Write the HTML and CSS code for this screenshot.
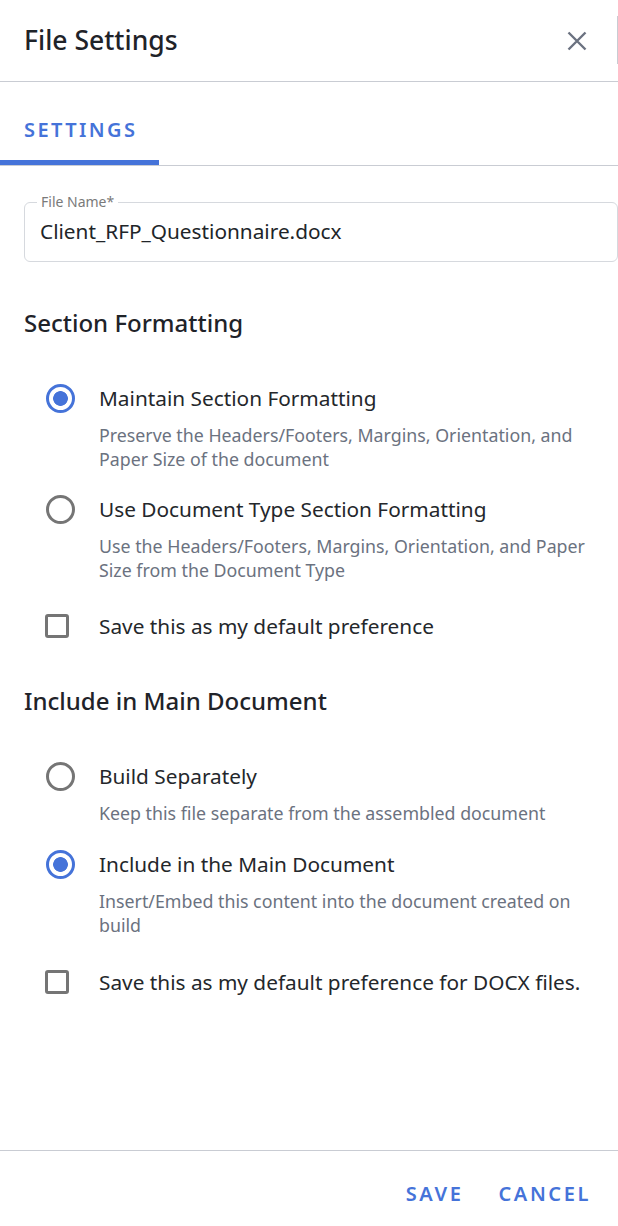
FILE: index.html
```html
<!DOCTYPE html>
<html lang="en">
<head>
<meta charset="utf-8">
<title>File Settings</title>
<link rel="stylesheet" href="styles.css">
</head>
<body>
<div class="dialog">
  <header class="dialog-header">
    <h1 class="dialog-title">File Settings</h1>
    <div class="header-actions">
      <button class="close-btn" aria-label="Close">
        <svg viewBox="0 0 20 20" width="20" height="20"><path d="M1.5 1.5 L18.5 18.5 M18.5 1.5 L1.5 18.5" stroke="currentColor" stroke-width="2.4" fill="none"/></svg>
      </button>
      <span class="header-divider"></span>
    </div>
  </header>

  <nav class="tabs">
    <div class="tab active">SETTINGS</div>
  </nav>

  <main class="content">
    <div class="field">
      <label class="field-label">File Name*</label>
      <div class="field-input">Client_RFP_Questionnaire.docx</div>
    </div>

    <section class="group">
      <h2 class="group-title">Section Formatting</h2>
      <div class="options">
        <div class="option">
          <div class="option-row">
            <span class="radio checked"></span>
            <span class="option-label">Maintain Section Formatting</span>
          </div>
          <p class="option-desc">Preserve the Headers/Footers, Margins, Orientation, and Paper Size of the document</p>
        </div>
        <div class="option">
          <div class="option-row">
            <span class="radio"></span>
            <span class="option-label">Use Document Type Section Formatting</span>
          </div>
          <p class="option-desc">Use the Headers/Footers, Margins, Orientation, and Paper Size from the Document Type</p>
        </div>
        <div class="option check-option">
          <div class="option-row">
            <span class="checkbox"></span>
            <span class="option-label">Save this as my default preference</span>
          </div>
        </div>
      </div>
    </section>

    <section class="group group-second">
      <h2 class="group-title">Include in Main Document</h2>
      <div class="options">
        <div class="option">
          <div class="option-row">
            <span class="radio"></span>
            <span class="option-label">Build Separately</span>
          </div>
          <p class="option-desc">Keep this file separate from the assembled document</p>
        </div>
        <div class="option">
          <div class="option-row">
            <span class="radio checked"></span>
            <span class="option-label">Include in the Main Document</span>
          </div>
          <p class="option-desc">Insert/Embed this content into the document created on build</p>
        </div>
        <div class="option check-option">
          <div class="option-row">
            <span class="checkbox"></span>
            <span class="option-label">Save this as my default preference for DOCX files.</span>
          </div>
        </div>
      </div>
    </section>
  </main>

  <footer class="dialog-footer">
    <button class="text-btn">SAVE</button>
    <button class="text-btn">CANCEL</button>
  </footer>
</div>
</body>
</html>
```

FILE: styles.css
```css
* { box-sizing: border-box; }

html, body {
  margin: 0;
  padding: 0;
  background: #ffffff;
}

body {
  font-family: "Noto Sans", "Open Sans", sans-serif;
  color: #212529;
}

.dialog {
  width: 618px;
  height: 1226px;
  display: flex;
  flex-direction: column;
  overflow: hidden;
}

.dialog-header {
  height: 82px;
  flex: none;
  display: flex;
  align-items: center;
  justify-content: space-between;
  padding: 0 0 2px 24px;
  border-bottom: 1px solid #c9ccd3;
}

.dialog-title {
  margin: 0;
  font-size: 26.5px;
  font-weight: 500;
  color: #1f2329;
  line-height: 34px;
}

.header-actions {
  display: flex;
  align-items: center;
  align-self: stretch;
}

.close-btn {
  border: 0;
  background: none;
  padding: 0;
  width: 20px;
  height: 20px;
  color: #6b7280;
  margin-right: 30px;
  margin-top: 2px;
  display: flex;
}

.header-divider {
  width: 1px;
  height: 48px;
  background: #c9ccd3;
}

.tabs {
  height: 84px;
  flex: none;
  display: flex;
  align-items: flex-end;
  border-bottom: 1px solid #c9ccd3;
}

.tab {
  width: 159px;
  height: 83px;
  padding: 35px 0 0 24px;
  font-size: 20px;
  font-weight: 600;
  letter-spacing: 2.4px;
  color: #4573d9;
  line-height: 26px;
}

.tab.active {
  border-bottom: 5px solid #4573d9;
}

.content {
  flex: 1;
  padding: 36px 0 0 24px;
}

.field {
  position: relative;
  height: 60px;
  border: 1px solid #d6d9de;
  border-radius: 6px;
  padding: 0 0 0 15px;
  display: flex;
  align-items: center;
}

.field-label {
  position: absolute;
  top: -10px;
  left: 12px;
  padding: 0 4px;
  background: #ffffff;
  font-size: 14px;
  line-height: 18px;
  color: #7a7a7a;
}

.field-input {
  font-size: 20.8px;
  color: #212529;
  line-height: 28px;
  margin-top: -3px;
}

.group {
  margin-top: 45px;
}

.group-second {
  margin-top: 44px;
}

.group-title {
  margin: 0;
  font-size: 24px;
  font-weight: 500;
  line-height: 32px;
  color: #1f2329;
}

.options {
  margin-top: 44px;
  padding-left: 21px;
  display: flex;
  flex-direction: column;
}

.option + .option {
  margin-top: 23px;
}

.group-second .option + .option {
  margin-top: 24px;
}

.option.check-option {
  margin-top: 29px;
}

.group-second .option.check-option {
  margin-top: 30px;
}

.option-row {
  display: flex;
  align-items: center;
  height: 30px;
}

.option-label {
  font-size: 20.8px;
  line-height: 30px;
  color: #24272b;
}

.radio {
  width: 30px;
  height: 30px;
  margin-right: 24px;
  flex: none;
  display: flex;
  align-items: center;
  justify-content: center;
}

.radio::before {
  content: "";
  width: 29px;
  height: 29px;
  border-radius: 50%;
  border: 3px solid #757575;
  box-sizing: border-box;
}

.radio.checked::before {
  border-color: #4573d9;
  background: radial-gradient(circle, #4573d9 0 7px, #ffffff 7.7px);
}

.checkbox {
  width: 24px;
  height: 24px;
  border: 3px solid #757575;
  border-radius: 3px;
  margin-right: 30px;
  flex: none;
}

.option-desc {
  margin: 10px 0 0 54px;
  font-size: 17.8px;
  line-height: 24px;
  color: #6b7280;
  padding-right: 16px;
}

.dialog-footer {
  flex: none;
  height: 76px;
  border-top: 1px solid #c9ccd3;
  display: flex;
  justify-content: flex-end;
  align-items: center;
  padding: 10px 27px 0 0;
  gap: 35px;
}

.text-btn {
  border: 0;
  background: none;
  padding: 0;
  font-family: inherit;
  font-size: 20px;
  font-weight: 600;
  letter-spacing: 2.6px;
  color: #4573d9;
  line-height: 26px;
}
```
